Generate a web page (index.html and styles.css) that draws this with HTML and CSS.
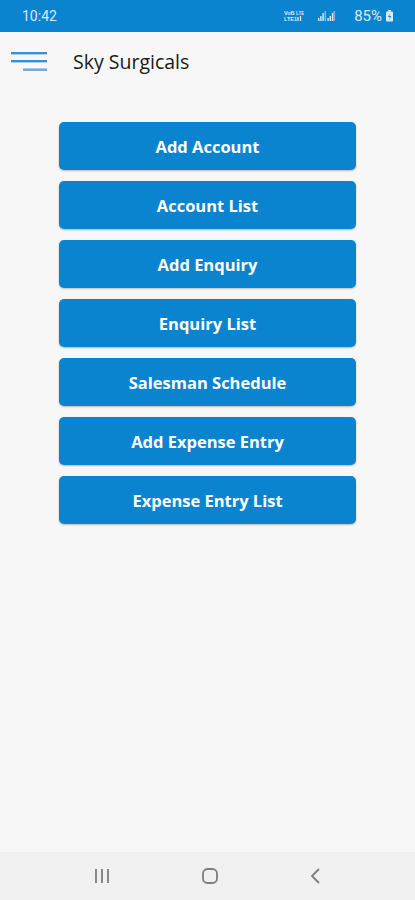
FILE: index.html
```html
<!DOCTYPE html>
<html>
<head>
<meta charset="utf-8">
<link rel="stylesheet" href="styles.css">
</head>
<body>
<div class="screen">
  <div class="statusbar">
    <span class="time">10:42</span>
    <div class="status-right">
      <svg class="sicon" width="20" height="12" viewBox="0 0 20 12">
        <text x="0" y="5" font-size="5.5" font-family="Liberation Sans, sans-serif" fill="#dcebf7" font-weight="bold">VoB</text>
        <text x="0" y="11" font-size="5.5" font-family="Liberation Sans, sans-serif" fill="#dcebf7" font-weight="bold">LTE1</text>
        <text x="12" y="5" font-size="4.5" font-family="Liberation Sans, sans-serif" fill="#dcebf7" font-weight="bold">LTE</text>
        <path d="M14 7v4M16.5 6v5" stroke="#dcebf7" stroke-width="1.2"/>
      </svg>
      <svg class="sicon sig" width="17" height="11" viewBox="0 0 17 11">
        <rect x="0" y="7" width="1.4" height="3" fill="#dcebf7"/>
        <rect x="2.2" y="5" width="1.4" height="5" fill="#dcebf7"/>
        <rect x="4.4" y="2" width="1.4" height="8" fill="#dcebf7"/>
        <rect x="6.6" y="0" width="1.4" height="10" fill="#dcebf7" opacity="0.55"/>
        <rect x="9.4" y="7" width="1.4" height="3" fill="#dcebf7"/>
        <rect x="11.6" y="5" width="1.4" height="5" fill="#dcebf7"/>
        <rect x="13.8" y="2" width="1.4" height="8" fill="#dcebf7"/>
        <rect x="15.6" y="0" width="1.4" height="10" fill="#dcebf7" opacity="0.55"/>
      </svg>
      <span class="batt-text">85%</span>
      <svg class="sicon" width="7" height="12" viewBox="0 0 7 12">
        <rect x="2" y="0" width="3" height="1.5" fill="#dcebf7"/>
        <rect x="0" y="1.5" width="7" height="10" rx="1" fill="#dcebf7"/>
        <path d="M4 3L2 7h2l-1 3.5L5.3 6h-2z" fill="#0b84d0"/>
      </svg>
    </div>
  </div>
  <div class="appbar">
    <svg class="menu" width="38" height="20" viewBox="0 0 38 20">
      <rect x="0" y="0" width="36" height="2.4" fill="#3b8fd3"/>
      <rect x="0" y="8" width="36" height="2.4" fill="#3b8fd3"/>
      <rect x="12" y="16.5" width="24" height="2.4" fill="#6aa6dc"/>
    </svg>
    <span class="title">Sky Surgicals</span>
  </div>
  <main class="content">
    <button class="btn">Add Account</button>
    <button class="btn">Account List</button>
    <button class="btn">Add Enquiry</button>
    <button class="btn">Enquiry List</button>
    <button class="btn">Salesman Schedule</button>
    <button class="btn">Add Expense Entry</button>
    <button class="btn">Expense Entry List</button>
  </main>
  <nav class="navbar">
    <svg width="18" height="16" viewBox="0 0 18 16">
      <path d="M3 1v14M9 1v14M15 1v14" stroke="#7d7d7d" stroke-width="1.8"/>
    </svg>
    <svg width="18" height="18" viewBox="0 0 18 18">
      <rect x="2" y="2" width="14" height="14" rx="4.5" fill="none" stroke="#7d7d7d" stroke-width="1.8"/>
    </svg>
    <svg width="14" height="18" viewBox="0 0 14 18">
      <path d="M10 2L3 9l7 7" fill="none" stroke="#7d7d7d" stroke-width="1.8"/>
    </svg>
  </nav>
</div>
</body>
</html>
```

FILE: styles.css
```css
* { box-sizing: border-box; }
html, body {
  margin: 0;
  padding: 0;
  background: #f7f7f7;
}
body {
  font-family: "Open Sans", "Liberation Sans", sans-serif;
}
.screen {
  width: 415px;
  height: 900px;
  display: flex;
  flex-direction: column;
  background: #f7f7f7;
}
.statusbar {
  height: 32px;
  background: #0b84d0;
  display: flex;
  align-items: center;
  justify-content: space-between;
  padding: 0 22px 0 22px;
  color: #dcebf7;
  font-family: Roboto, "Liberation Sans", sans-serif;
  font-size: 14px;
}
.status-right {
  display: flex;
  align-items: center;
  gap: 4px;
}
.sicon { display: block; }
.sig { margin-left: 10px; }
.batt-text { margin-left: 15px; font-size: 15px; }
.appbar {
  height: 58px;
  display: flex;
  align-items: center;
  padding-left: 11px;
}
.menu { display: block; margin-top: 1px; }
.title {
  margin-left: 24px;
  font-size: 19.5px;
  color: #1a1a1a;
  font-family: "Open Sans", "Liberation Sans", sans-serif;
}
.content {
  flex: 1;
  display: flex;
  flex-direction: column;
  align-items: center;
  gap: 11px;
  padding-top: 32px;
}
.btn {
  width: 297px;
  height: 48px;
  border: none;
  border-radius: 5px;
  background: #0b84d0;
  color: #ffffff;
  font-family: "Open Sans", "Liberation Sans", sans-serif;
  font-weight: 700;
  font-size: 16.5px;
  box-shadow: 0 1px 2px rgba(0,0,0,0.25);
  padding: 0;
}
.navbar {
  height: 48px;
  background: #f0f0f0;
  display: flex;
  align-items: center;
  justify-content: center;
  gap: 90px;
}
.navbar svg { display: block; }
```
